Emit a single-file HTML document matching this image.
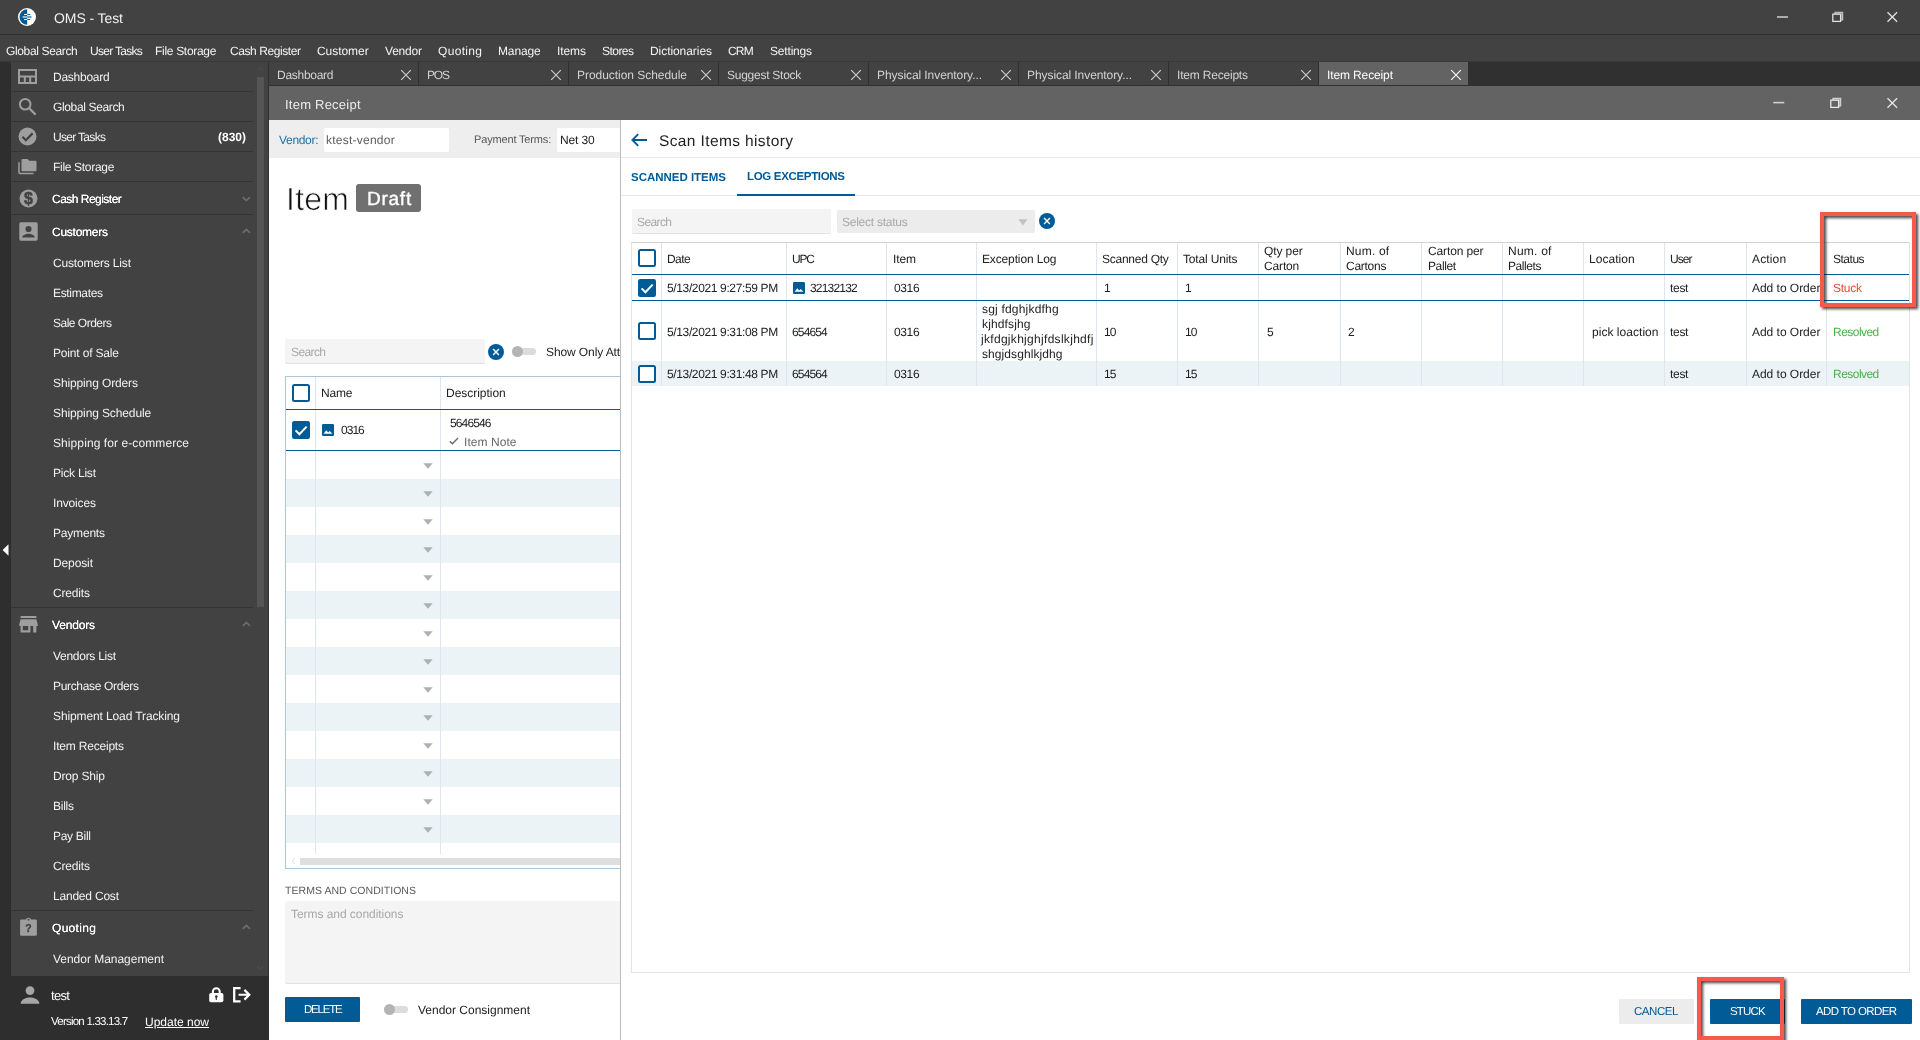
<!DOCTYPE html>
<html lang="en"><head><meta charset="utf-8"><title>OMS - Test</title>
<style>
html,body{margin:0;padding:0;background:#424242;}
body{width:1920px;height:1040px;overflow:hidden;font-family:"Liberation Sans",sans-serif;font-size:12px;color:#212121;}
#app{position:relative;width:1920px;height:1040px;overflow:hidden;background:#424242;}
.r{position:absolute;box-sizing:border-box;}
.t{position:absolute;white-space:nowrap;will-change:transform;text-rendering:geometricPrecision;}
svg{position:absolute;overflow:visible;}
.clip{position:absolute;overflow:hidden;}

</style></head>
<body>
<div id="app">
<div class="r" style="left:0px;top:0px;width:1920px;height:34px;background:#424242;"></div>
<div class="r" style="left:0px;top:34px;width:1920px;height:1px;background:#303030;"></div>
<div class="r" style="left:0px;top:35px;width:1920px;height:26px;background:#424242;"></div>
<div class="r" style="left:0px;top:61px;width:1920px;height:1px;background:#383838;"></div>
<svg style="left:18px;top:8px" width="18" height="18" viewBox="0 0 18 18">
<circle cx="9" cy="9" r="9" fill="#fff"/>
<path d="M9.2 1.3 A7.7 7.7 0 0 0 9.2 16.7 Z" fill="#005b96"/>
<path d="M9.2 6.5h3M9.2 11.5h3" stroke="#005b96" stroke-width="1.1" fill="none"/>
<path d="M9.2 9h4.3" stroke="#3a7fae" stroke-width="1.5" fill="none"/>
<path d="M6 6.5h3.2M6 11.5h3.2" stroke="#fff" stroke-width="1.1" fill="none"/>
<path d="M4.6 9h4.6" stroke="#c9dbe8" stroke-width="1.5" fill="none"/>
</svg>
<span id="t1" class="t" style="left:54px;top:8.0px;line-height:20px;font-size:14px;color:#f0f0f0;letter-spacing:-0.085px;">OMS - Test</span>
<svg style="left:1770px;top:6px" width="140" height="22" viewBox="0 0 140 22" fill="none" stroke="#e0e0e0">
<path d="M7 11h11" stroke-width="1.6" stroke="#c8c8c8"/>
<path d="M65 8v-1.6h7.6v7.4h-1.6" stroke-width="1.3" stroke="#bdbdbd" fill="#8a8a8a"/>
<rect x="62.8" y="8.2" width="7.8" height="7.2" stroke-width="1.3" fill="#424242"/>
<path d="M117.5 6.2l9.6 9.6M127.1 6.2l-9.6 9.6" stroke-width="1.3"/>
</svg>
<span id="t2" class="t" style="left:6px;top:40.5px;line-height:20px;color:#f4f4f4;letter-spacing:-0.362px;">Global Search</span>
<span id="t3" class="t" style="left:90.2px;top:40.5px;line-height:20px;color:#f4f4f4;letter-spacing:-0.705px;">User Tasks</span>
<span id="t4" class="t" style="left:155px;top:40.5px;line-height:20px;color:#f4f4f4;letter-spacing:-0.300px;">File Storage</span>
<span id="t5" class="t" style="left:230px;top:40.5px;line-height:20px;color:#f4f4f4;letter-spacing:-0.419px;">Cash Register</span>
<span id="t6" class="t" style="left:317.3px;top:40.5px;line-height:20px;color:#f4f4f4;letter-spacing:-0.045px;">Customer</span>
<span id="t7" class="t" style="left:385px;top:40.5px;line-height:20px;color:#f4f4f4;letter-spacing:-0.209px;">Vendor</span>
<span id="t8" class="t" style="left:437.8px;top:40.5px;line-height:20px;color:#f4f4f4;letter-spacing:0.328px;">Quoting</span>
<span id="t9" class="t" style="left:498.3px;top:40.5px;line-height:20px;color:#f4f4f4;letter-spacing:-0.135px;">Manage</span>
<span id="t10" class="t" style="left:556.9px;top:40.5px;line-height:20px;color:#f4f4f4;letter-spacing:-0.111px;">Items</span>
<span id="t11" class="t" style="left:602px;top:40.5px;line-height:20px;color:#f4f4f4;letter-spacing:-0.537px;">Stores</span>
<span id="t12" class="t" style="left:650px;top:40.5px;line-height:20px;color:#f4f4f4;letter-spacing:-0.064px;">Dictionaries</span>
<span id="t13" class="t" style="left:728px;top:40.5px;line-height:20px;color:#f4f4f4;letter-spacing:-0.814px;">CRM</span>
<span id="t14" class="t" style="left:769.9px;top:40.5px;line-height:20px;color:#f4f4f4;letter-spacing:-0.180px;">Settings</span>
<div class="r" style="left:0px;top:62px;width:11px;height:978px;background:#2e2e2e;"></div>
<svg style="left:2px;top:544px" width="7" height="12" viewBox="0 0 7 12"><path d="M6.5 0.3v11.4L0.6 6z" fill="#fff"/></svg>
<div class="r" style="left:11px;top:62px;width:257px;height:914px;background:#424242;"></div>
<div class="r" style="left:11px;top:976px;width:257px;height:64px;background:#2e2e2e;"></div>
<div class="r" style="left:268px;top:62px;width:1px;height:978px;background:#303030;"></div>
<div class="r" style="left:257px;top:77px;width:7px;height:530px;background:#555;"></div>
<svg style="left:257px;top:66px" width="7" height="6" viewBox="0 0 7 6"><path d="M0.5 4.8L3.5 1.6 6.5 4.8" stroke="#4d4d4d" stroke-width="1.2" fill="none"/></svg>
<svg style="left:257px;top:965px" width="7" height="6" viewBox="0 0 7 6"><path d="M0.5 1.2L3.5 4.4 6.5 1.2" stroke="#4d4d4d" stroke-width="1.2" fill="none"/></svg>
<div class="r" style="left:11px;top:91px;width:242px;height:1px;background:#353535;"></div>
<div class="r" style="left:11px;top:121px;width:242px;height:1px;background:#353535;"></div>
<div class="r" style="left:11px;top:151px;width:242px;height:1px;background:#353535;"></div>
<div class="r" style="left:11px;top:181px;width:242px;height:1px;background:#353535;"></div>
<div class="r" style="left:11px;top:214px;width:242px;height:1px;background:#353535;"></div>
<div class="r" style="left:11px;top:607px;width:242px;height:1px;background:#353535;"></div>
<div class="r" style="left:11px;top:910px;width:242px;height:1px;background:#353535;"></div>
<span id="t15" class="t" style="left:53px;top:66.5px;line-height:20px;color:#f2f2f2;letter-spacing:-0.252px;">Dashboard</span>
<span id="t16" class="t" style="left:53px;top:96.5px;line-height:20px;color:#f2f2f2;letter-spacing:-0.362px;">Global Search</span>
<span id="t17" class="t" style="left:53px;top:126.5px;line-height:20px;color:#f2f2f2;letter-spacing:-0.682px;">User Tasks</span>
<span id="t18" class="t" style="left:53px;top:156.5px;line-height:20px;color:#f2f2f2;letter-spacing:-0.309px;">File Storage</span>
<span id="t19" class="t" style="right:1673.5px;top:126.5px;line-height:20px;color:#fff;font-weight:700;">(830)</span>
<span id="t20" class="t" style="left:52px;top:188.5px;line-height:20px;color:#fff;letter-spacing:-0.519px;text-shadow:0 0 0.4px #fff;">Cash Register</span>
<span id="t21" class="t" style="left:52px;top:221.5px;line-height:20px;color:#fff;letter-spacing:-0.252px;text-shadow:0 0 0.4px #fff;">Customers</span>
<span id="t22" class="t" style="left:52px;top:614.5px;line-height:20px;color:#fff;letter-spacing:-0.174px;text-shadow:0 0 0.4px #fff;">Vendors</span>
<span id="t23" class="t" style="left:52px;top:917.5px;line-height:20px;color:#fff;letter-spacing:0.295px;text-shadow:0 0 0.4px #fff;">Quoting</span>
<span id="t24" class="t" style="left:53px;top:252.5px;line-height:20px;color:#f2f2f2;letter-spacing:-0.156px;">Customers List</span>
<span id="t25" class="t" style="left:53px;top:282.5px;line-height:20px;color:#f2f2f2;letter-spacing:-0.336px;">Estimates</span>
<span id="t26" class="t" style="left:53px;top:312.5px;line-height:20px;color:#f2f2f2;letter-spacing:-0.503px;">Sale Orders</span>
<span id="t27" class="t" style="left:53px;top:342.5px;line-height:20px;color:#f2f2f2;letter-spacing:-0.171px;">Point of Sale</span>
<span id="t28" class="t" style="left:53px;top:372.5px;line-height:20px;color:#f2f2f2;letter-spacing:-0.123px;">Shipping Orders</span>
<span id="t29" class="t" style="left:53px;top:402.5px;line-height:20px;color:#f2f2f2;letter-spacing:-0.117px;">Shipping Schedule</span>
<span id="t30" class="t" style="left:53px;top:432.5px;line-height:20px;color:#f2f2f2;letter-spacing:0.088px;">Shipping for e-commerce</span>
<span id="t31" class="t" style="left:53px;top:462.5px;line-height:20px;color:#f2f2f2;letter-spacing:-0.211px;">Pick List</span>
<span id="t32" class="t" style="left:53px;top:492.5px;line-height:20px;color:#f2f2f2;letter-spacing:-0.147px;">Invoices</span>
<span id="t33" class="t" style="left:53px;top:522.5px;line-height:20px;color:#f2f2f2;letter-spacing:-0.194px;">Payments</span>
<span id="t34" class="t" style="left:53px;top:552.5px;line-height:20px;color:#f2f2f2;letter-spacing:-0.115px;">Deposit</span>
<span id="t35" class="t" style="left:53px;top:582.5px;line-height:20px;color:#f2f2f2;letter-spacing:-0.169px;">Credits</span>
<span id="t36" class="t" style="left:53px;top:645.5px;line-height:20px;color:#f2f2f2;letter-spacing:-0.277px;">Vendors List</span>
<span id="t37" class="t" style="left:53px;top:675.5px;line-height:20px;color:#f2f2f2;letter-spacing:-0.336px;">Purchase Orders</span>
<span id="t38" class="t" style="left:53px;top:705.5px;line-height:20px;color:#f2f2f2;letter-spacing:-0.115px;">Shipment Load Tracking</span>
<span id="t39" class="t" style="left:53px;top:735.5px;line-height:20px;color:#f2f2f2;letter-spacing:-0.197px;">Item Receipts</span>
<span id="t40" class="t" style="left:53px;top:765.5px;line-height:20px;color:#f2f2f2;letter-spacing:-0.172px;">Drop Ship</span>
<span id="t41" class="t" style="left:53px;top:795.5px;line-height:20px;color:#f2f2f2;letter-spacing:-0.254px;">Bills</span>
<span id="t42" class="t" style="left:53px;top:825.5px;line-height:20px;color:#f2f2f2;letter-spacing:-0.288px;">Pay Bill</span>
<span id="t43" class="t" style="left:53px;top:855.5px;line-height:20px;color:#f2f2f2;letter-spacing:-0.169px;">Credits</span>
<span id="t44" class="t" style="left:53px;top:885.5px;line-height:20px;color:#f2f2f2;letter-spacing:-0.206px;">Landed Cost</span>
<span id="t45" class="t" style="left:53px;top:948.5px;line-height:20px;color:#f2f2f2;letter-spacing:-0.026px;">Vendor Management</span>
<svg style="left:242px;top:195.6px" width="9" height="6" viewBox="0 0 9 6"><path d="M0.8 1.1L4.4 4.6 8 1.1" stroke="#6c6c6c" stroke-width="1.8" fill="none"/></svg>
<svg style="left:242px;top:227.8px" width="9" height="6" viewBox="0 0 9 6"><path d="M0.8 4.9L4.4 1.4 8 4.9" stroke="#6c6c6c" stroke-width="1.8" fill="none"/></svg>
<svg style="left:242px;top:620.8px" width="9" height="6" viewBox="0 0 9 6"><path d="M0.8 4.9L4.4 1.4 8 4.9" stroke="#6c6c6c" stroke-width="1.8" fill="none"/></svg>
<svg style="left:242px;top:923.8px" width="9" height="6" viewBox="0 0 9 6"><path d="M0.8 4.9L4.4 1.4 8 4.9" stroke="#6c6c6c" stroke-width="1.8" fill="none"/></svg>
<svg style="left:18px;top:69px" width="19" height="15" viewBox="0 0 19 15" fill="none" stroke="#9e9e9e">
<rect x="1" y="1" width="17" height="13" stroke-width="2"/><path d="M1 7.6h17M6.8 8v6M12.2 8v6" stroke-width="2"/></svg>
<svg style="left:18px;top:97px" width="19" height="19" viewBox="0 0 19 19" fill="none" stroke="#9e9e9e">
<circle cx="7.2" cy="7.2" r="5.3" stroke-width="2"/><path d="M11.2 11.2L17.6 17.6" stroke-width="2.3"/></svg>
<svg style="left:18px;top:127px" width="19" height="19" viewBox="0 0 19 19">
<circle cx="9.5" cy="9.5" r="9" fill="#9e9e9e"/><path d="M4.4 9.8l3.4 3.4 6.8-6.8" stroke="#424242" stroke-width="2.2" fill="none"/></svg>
<svg style="left:18px;top:158px" width="19" height="17" viewBox="0 0 19 17">
<path d="M4.5 1h5l1.8 1.8h6.2a1 1 0 0 1 1 1v8.4a1 1 0 0 1-1 1h-13a1 1 0 0 1-1-1V2a1 1 0 0 1 1-1z" fill="#9e9e9e"/>
<path d="M1 4.2v10.3a1 1 0 0 0 1 1h13.5" stroke="#9e9e9e" stroke-width="1.5" fill="none"/></svg>
<svg style="left:19px;top:189px;will-change:transform" width="19" height="19" viewBox="0 0 19 19">
<circle cx="9.5" cy="9.5" r="9" fill="#9e9e9e"/>
<text x="9.5" y="15" font-family="Liberation Sans, sans-serif" font-size="16" font-weight="700" text-anchor="middle" fill="#424242" stroke="#424242" stroke-width="0.5">$</text></svg>
<svg style="left:19px;top:222px" width="19" height="19" viewBox="0 0 19 19">
<rect x="0.3" y="0.3" width="18.4" height="18.4" rx="1.6" fill="#9e9e9e"/>
<circle cx="9.5" cy="7" r="3.1" fill="#424242"/><path d="M3.2 15.6c0-2.6 4.2-3.8 6.3-3.8s6.3 1.2 6.3 3.8z" fill="#424242"/></svg>
<svg style="left:19px;top:616px" width="19" height="17" viewBox="0 0 19 17" fill="#9e9e9e">
<rect x="1.6" y="0" width="15.8" height="2"/><path d="M1.6 3.2h15.8l1.3 5v1.9H0.3v-1.9z"/>
<path d="M1.6 10h2.2v4.2h5.4v-4.2h2.2V16.4H1.6zM14.2 10h3.2v6.4h-3.2z"/></svg>
<svg style="left:20px;top:917px;will-change:transform" width="17" height="19" viewBox="0 0 17 19">
<path d="M1.5 2.6h4.4a2.7 2.7 0 0 1 5.2 0h4.4a1.4 1.4 0 0 1 1.4 1.4v13.4a1.4 1.4 0 0 1-1.4 1.4h-14a1.4 1.4 0 0 1-1.4-1.4V4a1.4 1.4 0 0 1 1.4-1.4z" fill="#9e9e9e"/>
<circle cx="8.5" cy="2.7" r="0.9" fill="#424242"/>
<text x="8.5" y="15.2" font-family="Liberation Sans, sans-serif" font-size="10.5" font-weight="700" text-anchor="middle" fill="#424242" stroke="#424242" stroke-width="0.35">?</text></svg>
<svg style="left:20px;top:986px" width="20" height="18" viewBox="0 0 20 18" fill="#a6a6a6">
<circle cx="10" cy="4.6" r="4.4"/><path d="M0.6 17.8c0-4.4 6-6.2 9.4-6.2s9.4 1.8 9.4 6.2z"/></svg>
<svg style="left:208.8px;top:987.4px" width="14.6" height="15.5" viewBox="0 0 14.6 15.5">
<path d="M3.9 7V4.6a3.4 3.4 0 0 1 6.8 0V7" stroke="#fff" stroke-width="2.1" fill="none"/>
<rect x="0.2" y="5.9" width="14.2" height="9.4" rx="1.8" fill="#fff"/><circle cx="7.3" cy="9.6" r="1.25" fill="#2e2e2e"/><rect x="6.7" y="9.8" width="1.2" height="3" fill="#2e2e2e"/></svg>
<svg style="left:233.4px;top:987.4px" width="17.4" height="15.5" viewBox="0 0 17.4 15.5" fill="none" stroke="#fff">
<path d="M7.6 1.1H1.2v13.3h6.4" stroke-width="2.3"/><path d="M5.6 7.75h10M11.4 2.9l4.9 4.85-4.9 4.85" stroke-width="2.2"/></svg>
<span id="t46" class="t" style="left:51px;top:986.0px;line-height:20px;font-size:13px;color:#fff;letter-spacing:-0.723px;">test</span>
<span id="t47" class="t" style="left:51px;top:1012.0px;line-height:20px;font-size:11.5px;color:#fff;letter-spacing:-0.770px;">Version 1.33.13.7</span>
<span id="t48" class="t" style="left:145px;top:1012.0px;line-height:20px;color:#fff;letter-spacing:-0.005px;text-decoration:underline;">Update now</span>
<div class="r" style="left:269px;top:62px;width:1651px;height:24px;background:#303030;"></div>
<div class="r" style="left:269px;top:62px;width:149px;height:23px;background:#424242;"></div>
<span id="t49" class="t" style="left:277px;top:64.5px;line-height:20px;color:#d4d4d4;letter-spacing:-0.277px;">Dashboard</span>
<svg style="left:400px;top:68.5px" width="12" height="12" viewBox="0 0 12 12"><path d="M1.2 1.2l9.6 9.6M10.8 1.2l-9.6 9.6" stroke="#d0d0d0" stroke-width="1.1" fill="none"/></svg>
<div class="r" style="left:419px;top:62px;width:149px;height:23px;background:#424242;"></div>
<span id="t50" class="t" style="left:427px;top:64.5px;line-height:20px;color:#d4d4d4;letter-spacing:-1.200px;">POS</span>
<svg style="left:550px;top:68.5px" width="12" height="12" viewBox="0 0 12 12"><path d="M1.2 1.2l9.6 9.6M10.8 1.2l-9.6 9.6" stroke="#d0d0d0" stroke-width="1.1" fill="none"/></svg>
<div class="r" style="left:569px;top:62px;width:149px;height:23px;background:#424242;"></div>
<span id="t51" class="t" style="left:577px;top:64.5px;line-height:20px;color:#d4d4d4;letter-spacing:-0.042px;">Production Schedule</span>
<svg style="left:700px;top:68.5px" width="12" height="12" viewBox="0 0 12 12"><path d="M1.2 1.2l9.6 9.6M10.8 1.2l-9.6 9.6" stroke="#d0d0d0" stroke-width="1.1" fill="none"/></svg>
<div class="r" style="left:719px;top:62px;width:149px;height:23px;background:#424242;"></div>
<span id="t52" class="t" style="left:727px;top:64.5px;line-height:20px;color:#d4d4d4;letter-spacing:-0.258px;">Suggest Stock</span>
<svg style="left:850px;top:68.5px" width="12" height="12" viewBox="0 0 12 12"><path d="M1.2 1.2l9.6 9.6M10.8 1.2l-9.6 9.6" stroke="#d0d0d0" stroke-width="1.1" fill="none"/></svg>
<div class="r" style="left:869px;top:62px;width:149px;height:23px;background:#424242;"></div>
<span id="t53" class="t" style="left:877px;top:64.5px;line-height:20px;color:#d4d4d4;letter-spacing:-0.075px;">Physical Inventory...</span>
<svg style="left:1000px;top:68.5px" width="12" height="12" viewBox="0 0 12 12"><path d="M1.2 1.2l9.6 9.6M10.8 1.2l-9.6 9.6" stroke="#d0d0d0" stroke-width="1.1" fill="none"/></svg>
<div class="r" style="left:1019px;top:62px;width:149px;height:23px;background:#424242;"></div>
<span id="t54" class="t" style="left:1027px;top:64.5px;line-height:20px;color:#d4d4d4;letter-spacing:-0.075px;">Physical Inventory...</span>
<svg style="left:1150px;top:68.5px" width="12" height="12" viewBox="0 0 12 12"><path d="M1.2 1.2l9.6 9.6M10.8 1.2l-9.6 9.6" stroke="#d0d0d0" stroke-width="1.1" fill="none"/></svg>
<div class="r" style="left:1169px;top:62px;width:149px;height:23px;background:#424242;"></div>
<span id="t55" class="t" style="left:1177px;top:64.5px;line-height:20px;color:#d4d4d4;letter-spacing:-0.197px;">Item Receipts</span>
<svg style="left:1300px;top:68.5px" width="12" height="12" viewBox="0 0 12 12"><path d="M1.2 1.2l9.6 9.6M10.8 1.2l-9.6 9.6" stroke="#d0d0d0" stroke-width="1.1" fill="none"/></svg>
<div class="r" style="left:1319px;top:62px;width:149px;height:23px;background:#636363;"></div>
<span id="t56" class="t" style="left:1327px;top:64.5px;line-height:20px;color:#fff;letter-spacing:-0.124px;">Item Receipt</span>
<svg style="left:1450px;top:68.5px" width="12" height="12" viewBox="0 0 12 12"><path d="M1.2 1.2l9.6 9.6M10.8 1.2l-9.6 9.6" stroke="#fff" stroke-width="1.1" fill="none"/></svg>
<div class="r" style="left:269px;top:86px;width:1651px;height:34px;background:#636363;"></div>
<span id="t57" class="t" style="left:285px;top:94.5px;line-height:20px;font-size:13px;color:#ececec;letter-spacing:0.229px;">Item Receipt</span>
<svg style="left:1766px;top:92px" width="140" height="22" viewBox="0 0 140 22" fill="none" stroke="#e6e6e6">
<path d="M7.3 10.6h11" stroke-width="1.6" stroke="#cfcfcf"/>
<path d="M67 8v-1.6h7.6v7.4h-1.6" stroke-width="1.3" stroke="#cfcfcf" fill="#9a9a9a"/>
<rect x="64.8" y="8.2" width="7.8" height="7.2" stroke-width="1.3" fill="#636363"/>
<path d="M121.5 6.2l9.6 9.6M131.1 6.2l-9.6 9.6" stroke-width="1.3"/>
</svg>
<div class="r" style="left:269px;top:120px;width:352px;height:38px;background:#eeeeee;"></div>
<div class="r" style="left:269px;top:158px;width:352px;height:882px;background:#fff;"></div>
<span id="t58" class="t" style="left:279px;top:130.0px;line-height:20px;color:#1f6fa3;letter-spacing:-0.312px;">Vendor:</span>
<div class="r" style="left:324px;top:127.5px;width:125px;height:24.5px;background:#fff;border-radius:2px;"></div>
<span id="t59" class="t" style="left:326.3px;top:130.0px;line-height:20px;color:#5c5c5c;letter-spacing:0.243px;">ktest-vendor</span>
<span id="t60" class="t" style="left:474.2px;top:130.0px;line-height:20px;font-size:11px;color:#555;letter-spacing:-0.160px;">Payment Terms:</span>
<div class="r" style="left:557px;top:127.5px;width:64px;height:24.5px;background:#fff;border-radius:2px 0 0 2px;"></div>
<span id="t61" class="t" style="left:559.5px;top:130.0px;line-height:20px;letter-spacing:-0.112px;">Net 30</span>
<span id="t62" class="t" style="left:285.5px;top:189.0px;line-height:20px;font-size:32px;color:#111;letter-spacing:0.255px;-webkit-text-stroke:0.7px #fff;">Item</span>
<div class="r" style="left:356px;top:184px;width:65px;height:28px;background:#707070;border-radius:3px;"></div>
<span id="t63" class="t" style="left:366.8px;top:190.0px;line-height:20px;font-size:19px;color:#fff;letter-spacing:0.753px;-webkit-text-stroke:0.35px #fff;">Draft</span>
<div class="r" style="left:285px;top:339px;width:200px;height:25px;background:#f4f4f4;border-radius:2px;border-bottom:1px solid #e2e2e2;"></div>
<span id="t64" class="t" style="left:291px;top:342.0px;line-height:20px;color:#a8a8a8;letter-spacing:-0.606px;">Search</span>
<svg style="left:487.7px;top:343.7px" width="16" height="16" viewBox="0 0 16 16"><circle cx="8" cy="8" r="8" fill="#005b96"/><path d="M5.1 5.1l5.8 5.8M10.9 5.1l-5.8 5.8" stroke="#fff" stroke-width="1.4" fill="none"/></svg>
<div class="r" style="left:515px;top:348.2px;width:21px;height:7px;background:#dcdcdc;border-radius:3.5px;"></div>
<div class="r" style="left:512px;top:346.2px;width:11px;height:11px;background:#b4b4b4;border-radius:50%;"></div>
<div class="clip" style="left:540px;top:340px;width:80px;height:24px;"><span class="t" style="left:6px;top:2px;line-height:20px;letter-spacing:-0.1px;">Show Only Attached</span></div>
<div class="r" style="left:285px;top:376px;width:336px;height:493px;background:transparent;border:1px solid #a9c6de;border-right:0;"></div>
<svg style="left:423px;top:462.5px" width="10" height="6" viewBox="0 0 10 6"><path d="M0.3 0.2h9.4L5 5.8z" fill="#b0b0b0"/></svg>
<div class="r" style="left:286px;top:479px;width:335px;height:28px;background:#ebf3f7;"></div>
<svg style="left:423px;top:490.5px" width="10" height="6" viewBox="0 0 10 6"><path d="M0.3 0.2h9.4L5 5.8z" fill="#b0b0b0"/></svg>
<svg style="left:423px;top:518.5px" width="10" height="6" viewBox="0 0 10 6"><path d="M0.3 0.2h9.4L5 5.8z" fill="#b0b0b0"/></svg>
<div class="r" style="left:286px;top:535px;width:335px;height:28px;background:#ebf3f7;"></div>
<svg style="left:423px;top:546.5px" width="10" height="6" viewBox="0 0 10 6"><path d="M0.3 0.2h9.4L5 5.8z" fill="#b0b0b0"/></svg>
<svg style="left:423px;top:574.5px" width="10" height="6" viewBox="0 0 10 6"><path d="M0.3 0.2h9.4L5 5.8z" fill="#b0b0b0"/></svg>
<div class="r" style="left:286px;top:591px;width:335px;height:28px;background:#ebf3f7;"></div>
<svg style="left:423px;top:602.5px" width="10" height="6" viewBox="0 0 10 6"><path d="M0.3 0.2h9.4L5 5.8z" fill="#b0b0b0"/></svg>
<svg style="left:423px;top:630.5px" width="10" height="6" viewBox="0 0 10 6"><path d="M0.3 0.2h9.4L5 5.8z" fill="#b0b0b0"/></svg>
<div class="r" style="left:286px;top:647px;width:335px;height:28px;background:#ebf3f7;"></div>
<svg style="left:423px;top:658.5px" width="10" height="6" viewBox="0 0 10 6"><path d="M0.3 0.2h9.4L5 5.8z" fill="#b0b0b0"/></svg>
<svg style="left:423px;top:686.5px" width="10" height="6" viewBox="0 0 10 6"><path d="M0.3 0.2h9.4L5 5.8z" fill="#b0b0b0"/></svg>
<div class="r" style="left:286px;top:703px;width:335px;height:28px;background:#ebf3f7;"></div>
<svg style="left:423px;top:714.5px" width="10" height="6" viewBox="0 0 10 6"><path d="M0.3 0.2h9.4L5 5.8z" fill="#b0b0b0"/></svg>
<svg style="left:423px;top:742.5px" width="10" height="6" viewBox="0 0 10 6"><path d="M0.3 0.2h9.4L5 5.8z" fill="#b0b0b0"/></svg>
<div class="r" style="left:286px;top:759px;width:335px;height:28px;background:#ebf3f7;"></div>
<svg style="left:423px;top:770.5px" width="10" height="6" viewBox="0 0 10 6"><path d="M0.3 0.2h9.4L5 5.8z" fill="#b0b0b0"/></svg>
<svg style="left:423px;top:798.5px" width="10" height="6" viewBox="0 0 10 6"><path d="M0.3 0.2h9.4L5 5.8z" fill="#b0b0b0"/></svg>
<div class="r" style="left:286px;top:815px;width:335px;height:28px;background:#ebf3f7;"></div>
<svg style="left:423px;top:826.5px" width="10" height="6" viewBox="0 0 10 6"><path d="M0.3 0.2h9.4L5 5.8z" fill="#b0b0b0"/></svg>
<div class="r" style="left:286px;top:857px;width:335px;height:11px;background:#fff;"></div>
<div class="r" style="left:315px;top:377px;width:1px;height:477px;background:#dfe6eb;"></div>
<div class="r" style="left:440px;top:377px;width:1px;height:477px;background:#dfe6eb;"></div>
<div class="r" style="left:286px;top:409px;width:335px;height:1.3px;background:#005b96;"></div>
<div class="r" style="left:286px;top:450px;width:335px;height:1.3px;background:#005b96;"></div>
<div class="r" style="left:292px;top:384px;width:18px;height:18px;background:#fff;border:2px solid #005b96;border-radius:2.5px;"></div>
<svg style="left:292px;top:421px" width="18" height="18" viewBox="0 0 18 18"><rect width="18" height="18" rx="2.2" fill="#005b96"/><path d="M3.6 9.4l3.8 3.8 7.2-7.6" stroke="#fff" stroke-width="2" fill="none"/></svg>
<span id="t65" class="t" style="left:321px;top:383.0px;line-height:20px;letter-spacing:-0.172px;">Name</span>
<span id="t66" class="t" style="left:446px;top:383.0px;line-height:20px;letter-spacing:-0.033px;">Description</span>
<svg style="left:322px;top:423.5px" width="12" height="12" viewBox="0 0 12 12"><rect width="12" height="12" rx="1.3" fill="#005b96"/><path d="M1.6 9.8l2.7-3.5 1.9 2.3 1.5-1.6 2.7 2.8z" fill="#fff"/></svg>
<span id="t67" class="t" style="left:341px;top:420.0px;line-height:20px;letter-spacing:-0.968px;">0316</span>
<span id="t68" class="t" style="left:449.5px;top:412.5px;line-height:20px;letter-spacing:-0.870px;">5646546</span>
<svg style="left:449px;top:437px" width="10" height="8" viewBox="0 0 10 8"><path d="M0.8 4.2l2.6 2.6 5.6-5.8" stroke="#666" stroke-width="1.3" fill="none"/></svg>
<span id="t69" class="t" style="left:464.3px;top:431.6px;line-height:20px;color:#686868;letter-spacing:0.059px;">Item Note</span>
<svg style="left:291px;top:857px" width="5" height="8" viewBox="0 0 5 8"><path d="M4 0.8L1 4l3 3.2" stroke="#e2e2e2" stroke-width="1" fill="none"/></svg>
<div class="r" style="left:300px;top:858px;width:321px;height:6.5px;background:#dedede;"></div>
<span id="t70" class="t" style="left:285px;top:881.0px;line-height:20px;font-size:10.5px;color:#5a5a5a;letter-spacing:0.048px;">TERMS AND CONDITIONS</span>
<div class="r" style="left:285px;top:901px;width:336px;height:82.5px;background:#f4f4f4;border-radius:2px 0 0 2px;border-bottom:1px solid #e2e2e2;"></div>
<span id="t71" class="t" style="left:291px;top:904.0px;line-height:20px;color:#a8a8a8;letter-spacing:-0.052px;">Terms and conditions</span>
<div class="r" style="left:285px;top:997px;width:75px;height:25px;background:#005b96;border-radius:1px;"></div>
<span id="t72" class="t" style="left:304px;top:999.7px;line-height:20px;font-size:11.5px;color:#fff;letter-spacing:-1.200px;">DELETE</span>
<div class="r" style="left:387px;top:1006.0px;width:21px;height:7px;background:#dcdcdc;border-radius:3.5px;"></div>
<div class="r" style="left:384px;top:1004.0px;width:11px;height:11px;background:#b4b4b4;border-radius:50%;"></div>
<span id="t73" class="t" style="left:418px;top:999.5px;line-height:20px;letter-spacing:-0.005px;">Vendor Consignment</span>
<div class="r" style="left:620px;top:120px;width:1px;height:920px;background:#bdbdbd;"></div>
<div class="r" style="left:621px;top:120px;width:1299px;height:920px;background:#fff;"></div>
<svg style="left:631px;top:133px" width="17" height="14" viewBox="0 0 17 14"><path d="M16 7H2M7.2 1.2L1.4 7l5.8 5.8" stroke="#005b96" stroke-width="1.9" fill="none"/></svg>
<span id="t74" class="t" style="left:659px;top:131.5px;line-height:20px;font-size:15.5px;color:#1f1f1f;letter-spacing:0.382px;">Scan Items history</span>
<div class="r" style="left:621px;top:157px;width:1299px;height:1px;background:#e8e8e8;"></div>
<span id="t75" class="t" style="left:631px;top:168.0px;line-height:20px;font-size:11.5px;color:#005b96;font-weight:700;letter-spacing:-0.017px;">SCANNED ITEMS</span>
<span id="t76" class="t" style="left:746.5px;top:167.0px;line-height:20px;font-size:11.5px;color:#005b96;font-weight:700;letter-spacing:-0.327px;">LOG EXCEPTIONS</span>
<div class="r" style="left:621px;top:195px;width:1299px;height:1px;background:#e8e8e8;"></div>
<div class="r" style="left:736.5px;top:194px;width:118.5px;height:2px;background:#005b96;"></div>
<div class="r" style="left:631.5px;top:209px;width:199px;height:24.5px;background:#f4f4f4;border-radius:2px;border-bottom:1px solid #e2e2e2;"></div>
<span id="t77" class="t" style="left:636.8px;top:212.0px;line-height:20px;color:#a8a8a8;letter-spacing:-0.606px;">Search</span>
<div class="r" style="left:837px;top:210px;width:198px;height:22.5px;background:#ececec;border-radius:2px;"></div>
<span id="t78" class="t" style="left:842px;top:212.0px;line-height:20px;color:#a8a8a8;letter-spacing:-0.250px;">Select status</span>
<svg style="left:1017.5px;top:218.7px" width="10" height="7" viewBox="0 0 10 7"><path d="M0.3 0.2h9.2L4.9 6.6z" fill="#c2c2c2"/></svg>
<svg style="left:1039px;top:213px" width="16" height="16" viewBox="0 0 16 16"><circle cx="8" cy="8" r="8" fill="#005b96"/><path d="M5.1 5.1l5.8 5.8M10.9 5.1l-5.8 5.8" stroke="#fff" stroke-width="1.4" fill="none"/></svg>
<div class="r" style="left:631px;top:242px;width:1278.5px;height:730.5px;background:#fff;border:1px solid #e3e3e3;border-top:1px solid #d2d2d2;"></div>
<div class="r" style="left:632px;top:361px;width:1276.5px;height:24.5px;background:#ebf3f7;"></div>
<div class="r" style="left:661px;top:243px;width:1px;height:142.5px;background:#dfe6eb;"></div>
<div class="r" style="left:786px;top:243px;width:1px;height:142.5px;background:#dfe6eb;"></div>
<div class="r" style="left:886px;top:243px;width:1px;height:142.5px;background:#dfe6eb;"></div>
<div class="r" style="left:976px;top:243px;width:1px;height:142.5px;background:#dfe6eb;"></div>
<div class="r" style="left:1096px;top:243px;width:1px;height:142.5px;background:#dfe6eb;"></div>
<div class="r" style="left:1177px;top:243px;width:1px;height:142.5px;background:#dfe6eb;"></div>
<div class="r" style="left:1258px;top:243px;width:1px;height:142.5px;background:#dfe6eb;"></div>
<div class="r" style="left:1340px;top:243px;width:1px;height:142.5px;background:#dfe6eb;"></div>
<div class="r" style="left:1421px;top:243px;width:1px;height:142.5px;background:#dfe6eb;"></div>
<div class="r" style="left:1502px;top:243px;width:1px;height:142.5px;background:#dfe6eb;"></div>
<div class="r" style="left:1583px;top:243px;width:1px;height:142.5px;background:#dfe6eb;"></div>
<div class="r" style="left:1664px;top:243px;width:1px;height:142.5px;background:#dfe6eb;"></div>
<div class="r" style="left:1746px;top:243px;width:1px;height:142.5px;background:#dfe6eb;"></div>
<div class="r" style="left:1826px;top:243px;width:1px;height:142.5px;background:#dfe6eb;"></div>
<div class="r" style="left:632px;top:274px;width:1276.5px;height:1.3px;background:#005b96;"></div>
<div class="r" style="left:632px;top:300px;width:1276.5px;height:1.3px;background:#005b96;"></div>
<div class="r" style="left:638px;top:249px;width:18px;height:18px;background:#fff;border:2px solid #005b96;border-radius:2.5px;"></div>
<svg style="left:638px;top:279px" width="18" height="18" viewBox="0 0 18 18"><rect width="18" height="18" rx="2.2" fill="#005b96"/><path d="M3.6 9.4l3.8 3.8 7.2-7.6" stroke="#fff" stroke-width="2" fill="none"/></svg>
<div class="r" style="left:638px;top:322px;width:18px;height:18px;background:#fff;border:2px solid #005b96;border-radius:2.5px;"></div>
<div class="r" style="left:638px;top:365px;width:18px;height:18px;background:#fff;border:2px solid #005b96;border-radius:2.5px;"></div>
<span id="t79" class="t" style="left:667.4px;top:248.8px;line-height:20px;letter-spacing:-0.586px;">Date</span>
<span id="t80" class="t" style="left:792.4px;top:248.8px;line-height:20px;letter-spacing:-1.200px;">UPC</span>
<span id="t81" class="t" style="left:892.5px;top:248.8px;line-height:20px;letter-spacing:-0.115px;">Item</span>
<span id="t82" class="t" style="left:982px;top:248.8px;line-height:20px;letter-spacing:-0.139px;">Exception Log</span>
<span id="t83" class="t" style="left:1102px;top:248.8px;line-height:20px;letter-spacing:-0.258px;">Scanned Qty</span>
<span id="t84" class="t" style="left:1183.4px;top:248.8px;line-height:20px;letter-spacing:-0.163px;">Total Units</span>
<span id="t85" class="t" style="left:1264.3px;top:241.0px;line-height:20px;letter-spacing:-0.110px;">Qty per</span>
<span id="t86" class="t" style="left:1264.3px;top:255.60000000000002px;line-height:20px;letter-spacing:-0.146px;">Carton</span>
<span id="t87" class="t" style="left:1346.4px;top:241.0px;line-height:20px;letter-spacing:0.197px;">Num. of</span>
<span id="t88" class="t" style="left:1346.4px;top:255.60000000000002px;line-height:20px;letter-spacing:-0.272px;">Cartons</span>
<span id="t89" class="t" style="left:1427.5px;top:241.0px;line-height:20px;letter-spacing:-0.134px;">Carton per</span>
<span id="t90" class="t" style="left:1427.5px;top:255.60000000000002px;line-height:20px;letter-spacing:-0.386px;">Pallet</span>
<span id="t91" class="t" style="left:1508.2px;top:241.0px;line-height:20px;letter-spacing:0.231px;">Num. of</span>
<span id="t92" class="t" style="left:1508.2px;top:255.60000000000002px;line-height:20px;letter-spacing:-0.439px;">Pallets</span>
<span id="t93" class="t" style="left:1589px;top:248.8px;line-height:20px;letter-spacing:0.032px;">Location</span>
<span id="t94" class="t" style="left:1670.3px;top:248.8px;line-height:20px;letter-spacing:-0.915px;">User</span>
<span id="t95" class="t" style="left:1752.3px;top:248.8px;line-height:20px;letter-spacing:0.148px;">Action</span>
<span id="t96" class="t" style="left:1833px;top:248.8px;line-height:20px;letter-spacing:-0.486px;">Status</span>
<span id="t97" class="t" style="left:667.4px;top:277.7px;line-height:20px;letter-spacing:-0.363px;">5/13/2021 9:27:59 PM</span>
<span id="t98" class="t" style="left:893.9px;top:277.7px;line-height:20px;letter-spacing:-0.368px;">0316</span>
<span id="t99" class="t" style="left:1104.3px;top:277.7px;line-height:20px;">1</span>
<span id="t100" class="t" style="left:1185.4px;top:277.7px;line-height:20px;">1</span>
<span id="t101" class="t" style="left:1670.3px;top:277.7px;line-height:20px;letter-spacing:-0.315px;">test</span>
<span id="t102" class="t" style="left:1752.3px;top:277.7px;line-height:20px;letter-spacing:-0.028px;">Add to Order</span>
<span id="t103" class="t" style="left:1833px;top:277.7px;line-height:20px;color:#f44336;letter-spacing:-0.254px;">Stuck</span>
<span id="t104" class="t" style="left:667.4px;top:321.6px;line-height:20px;letter-spacing:-0.363px;">5/13/2021 9:31:08 PM</span>
<span id="t105" class="t" style="left:792px;top:321.6px;line-height:20px;letter-spacing:-0.849px;">654654</span>
<span id="t106" class="t" style="left:893.9px;top:321.6px;line-height:20px;letter-spacing:-0.368px;">0316</span>
<span id="t107" class="t" style="left:1104.3px;top:321.6px;line-height:20px;letter-spacing:-0.959px;">10</span>
<span id="t108" class="t" style="left:1185.4px;top:321.6px;line-height:20px;letter-spacing:-0.959px;">10</span>
<span id="t109" class="t" style="left:1266.6px;top:321.6px;line-height:20px;">5</span>
<span id="t110" class="t" style="left:1347.6px;top:321.6px;line-height:20px;">2</span>
<span id="t111" class="t" style="left:1591.5px;top:321.6px;line-height:20px;letter-spacing:0.038px;">pick loaction</span>
<span id="t112" class="t" style="left:1670.3px;top:321.6px;line-height:20px;letter-spacing:-0.315px;">test</span>
<span id="t113" class="t" style="left:1752.3px;top:321.6px;line-height:20px;letter-spacing:-0.028px;">Add to Order</span>
<span id="t114" class="t" style="left:1833px;top:321.6px;line-height:20px;color:#4caf50;letter-spacing:-0.533px;">Resolved</span>
<span id="t115" class="t" style="left:667.4px;top:363.6px;line-height:20px;letter-spacing:-0.363px;">5/13/2021 9:31:48 PM</span>
<span id="t116" class="t" style="left:792px;top:363.6px;line-height:20px;letter-spacing:-0.849px;">654564</span>
<span id="t117" class="t" style="left:893.9px;top:363.6px;line-height:20px;letter-spacing:-0.368px;">0316</span>
<span id="t118" class="t" style="left:1104.3px;top:363.6px;line-height:20px;letter-spacing:-0.959px;">15</span>
<span id="t119" class="t" style="left:1185.4px;top:363.6px;line-height:20px;letter-spacing:-0.959px;">15</span>
<span id="t120" class="t" style="left:1670.3px;top:363.6px;line-height:20px;letter-spacing:-0.315px;">test</span>
<span id="t121" class="t" style="left:1752.3px;top:363.6px;line-height:20px;letter-spacing:-0.028px;">Add to Order</span>
<span id="t122" class="t" style="left:1833px;top:363.6px;line-height:20px;color:#4caf50;letter-spacing:-0.533px;">Resolved</span>
<svg style="left:793px;top:281.5px" width="12" height="12" viewBox="0 0 12 12"><rect width="12" height="12" rx="1.3" fill="#005b96"/><path d="M1.6 9.8l2.7-3.5 1.9 2.3 1.5-1.6 2.7 2.8z" fill="#fff"/></svg>
<span id="t123" class="t" style="left:810px;top:277.7px;line-height:20px;letter-spacing:-0.813px;">32132132</span>
<span id="t124" class="t" style="left:982px;top:299.0px;line-height:20px;letter-spacing:0.195px;">sgj fdghjkdfhg</span>
<span id="t125" class="t" style="left:982px;top:314.0px;line-height:20px;letter-spacing:0.141px;">kjhdfsjhg</span>
<span id="t126" class="t" style="left:981px;top:329.2px;line-height:20px;letter-spacing:0.302px;">jkfdgjkhjghjfdslkjhdfj</span>
<span id="t127" class="t" style="left:982px;top:344.3px;line-height:20px;letter-spacing:0.085px;">shgjdsghlkjdhg</span>
<div class="r" style="left:1619px;top:999px;width:75px;height:25px;background:#ececec;border-radius:1px;"></div>
<span id="t128" class="t" style="left:1634px;top:1002.0px;line-height:20px;font-size:11.5px;color:#005b96;letter-spacing:-0.431px;">CANCEL</span>
<div class="r" style="left:1710px;top:999px;width:75px;height:25px;background:#005b96;border-radius:1px;"></div>
<span id="t129" class="t" style="left:1729.7px;top:1002.0px;line-height:20px;font-size:11.5px;color:#fff;letter-spacing:-0.846px;">STUCK</span>
<div class="r" style="left:1801px;top:999px;width:111px;height:25px;background:#005b96;border-radius:1px;"></div>
<span id="t130" class="t" style="left:1816px;top:1002.0px;line-height:20px;font-size:11.5px;color:#fff;letter-spacing:-0.615px;">ADD TO ORDER</span>
<div class="r" style="left:1820px;top:212px;width:95.8px;height:95px;background:transparent;border:4.5px solid #f55a4b;filter:drop-shadow(2px 2px 1.5px rgba(0,0,0,.75));"></div>
<div class="r" style="left:1697px;top:977px;width:87px;height:62.9px;background:transparent;border:4.5px solid #f55a4b;filter:drop-shadow(2px 2px 1.5px rgba(0,0,0,.75));"></div>
</div>
</body></html>
